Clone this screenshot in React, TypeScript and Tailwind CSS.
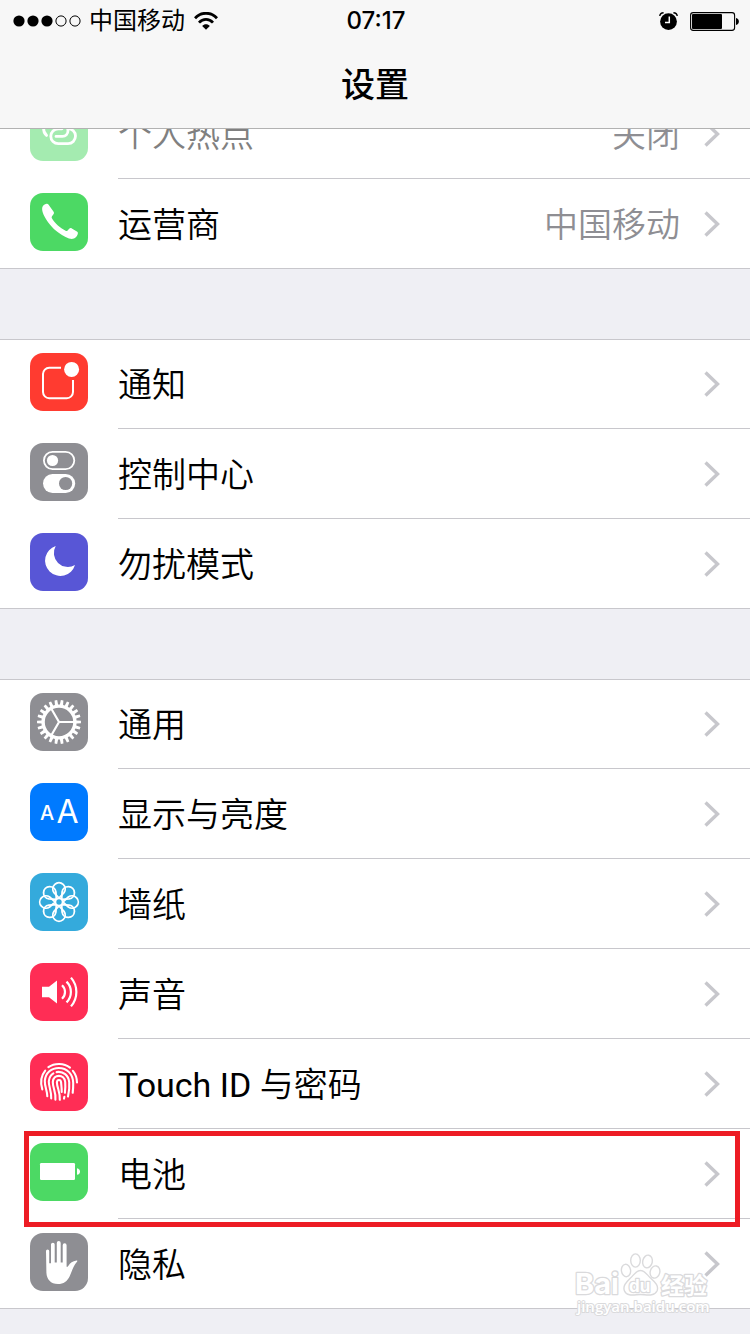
import type { ReactNode } from "react";

type Item = {
  label: string;
  icon: ReactNode;
  tile: string;
  value?: string;
  dimmed?: boolean;
  highlighted?: boolean;
};

const GEAR_TEETH = 22;
const gearPath = (() => {
  const points: string[] = [];
  const at = (radius: number, angle: number) =>
    `${(29 + radius * Math.cos(angle)).toFixed(2)} ${(29 + radius * Math.sin(angle)).toFixed(2)}`;
  const step = (Math.PI * 2) / GEAR_TEETH;
  for (let i = 0; i < GEAR_TEETH; i++) {
    const a = i * step;
    points.push(at(17.6, a - step * 0.32), at(22, a - step * 0.21), at(22, a + step * 0.21), at(17.6, a + step * 0.32));
  }
  return `M${points.join("L")}Z M43.2 29A14.2 14.2 0 1 0 14.8 29A14.2 14.2 0 1 0 43.2 29Z`;
})();

function Glyph({ children }: { children: ReactNode }) {
  return (
    <svg viewBox="0 0 58 58" className="size-full" fill="none" stroke="none" aria-hidden="true">
      {children}
    </svg>
  );
}

const HotspotIcon = (
  <Glyph>
    <g stroke="#fff" strokeWidth="2.8" strokeLinecap="round">
      <path d="M26 33.4H32.5A5.6 5.6 0 0 0 38 27.8A5.6 5.6 0 0 0 32.5 22.2" />
      <path d="M38 25.6A7.4 7.4 0 0 1 38 40.6H28.2A7.4 7.4 0 0 1 28.2 25.8H32" />
      <path d="M16.6 32.4A9 9 0 0 1 13.6 25A8 8 0 0 1 21.5 17.500H29" />
    </g>
  </Glyph>
);

const PhoneIcon = (
  <Glyph>
    <path
      fill="#fff"
      d="M12.2 14.8C12.6 12.4 14.6 11 16.6 10.7C17.6 10.6 18.2 11 18.8 11.9L23.6 18.8C24.2 19.8 24.1 20.7 23.3 21.6L22 23.2C21.5 23.9 21.5 24.5 21.9 25.2C24.5 29.6 30 35 35.6 37.7C36.4 38 37 38 37.6 37.4L39.2 35.8C40 35 40.8 34.9 41.8 35.4L46.9 38.6C48 39.3 48.1 40.2 47.7 41.2C46.8 43.6 45.2 45.4 43 45.8C39.2 46.4 33.6 43.4 28.3 39.5C22.3 35.1 16.8 28.6 13.6 21.7C12.5 19.2 11.9 16.8 12.2 14.8Z"
    />
  </Glyph>
);

const NotificationIcon = (
  <Glyph>
    <path d="M31 14.8H19.2A6.3 6.3 0 0 0 13 21V39A6.3 6.3 0 0 0 19.2 45.2H36.8A6.3 6.3 0 0 0 43 39V27" stroke="#fff" strokeWidth="2" />
    <circle cx="41.6" cy="16.4" r="7.5" fill="#fff" />
  </Glyph>
);

const ControlIcon = (
  <Glyph>
    <rect x="13.9" y="8.9" width="30.4" height="17.2" rx="8.6" stroke="#fff" strokeWidth="1.8" />
    <circle cx="22.5" cy="17.5" r="5.6" fill="#fff" />
    <rect x="13" y="31" width="32.2" height="19" rx="9.5" fill="#fff" />
    <circle cx="35.6" cy="40.5" r="6.6" fill="#8e8e93" />
  </Glyph>
);

const MoonIcon = (
  <Glyph>
    <path fill="#fff" d="M25.7 13A15.3 15.3 0 1 0 45 32A14 14 0 0 1 25.7 13Z" />
  </Glyph>
);

const GearIcon = (
  <Glyph>
    <path fill="#fff" fillRule="evenodd" d={gearPath} />
    <path d="M29 29H44M29 29L21.5 16M29 29L21.5 42" stroke="#fff" strokeWidth="2.2" />
  </Glyph>
);

const DisplayIcon = (
  <Glyph>
    <g fill="#fff" textAnchor="middle" className="font-['Inter',sans-serif]">
      <text x="17.2" y="36.5" fontSize="20" fontWeight="500">A</text>
      <text x="37.5" y="40" fontSize="32" fontWeight="400">A</text>
    </g>
  </Glyph>
);

const WallpaperIcon = (
  <Glyph>
    <g stroke="#fff" strokeWidth="1.8" strokeLinejoin="round">
      <circle cx="29" cy="29" r="3.6" />
      {[0, 45, 90, 135, 180, 225, 270, 315].map((angle) => (
        <path key={angle} transform={`rotate(${angle} 29 29)`} d="M29 25.2L24 19.600A6.2 6.2 0 1 1 34 19.600Z" />
      ))}
    </g>
  </Glyph>
);

const SoundIcon = (
  <Glyph>
    <path fill="#fff" d="M12 23.8H19L27 17.6V40.4L19 34.2H12Z" />
    <g stroke="#fff" strokeWidth="2.2">
      <path d="M32 22.2A9.2 9.2 0 0 1 32 35.8" />
      <path d="M36.5 18.6A14.5 14.5 0 0 1 36.5 39.4" />
      <path d="M41 14.6A22 22 0 0 1 41 43.4" />
    </g>
  </Glyph>
);

const TouchIcon = (
  <Glyph>
    <g stroke="#fff" strokeWidth="2.1" strokeLinecap="round">
      <path d="M18.4 14.2C24.5 9.8 34 9.8 40 14.6" />
      <path d="M15.2 17.6C11.2 22.5 10 29 12.3 36.4" />
      <path d="M42.9 17.8C45.5 21 46.9 25 47 29.4" />
      <path d="M17.3 43.2C17.4 38 14.6 34 14.8 27.8C15.6 19.5 21.5 15 28.8 15C37 15 43 21 43.2 30C43.3 34 43 37 42.7 39.8" />
      <path d="M21.2 45.4C21.8 38.5 18.6 34 18.8 28.4C19.2 24.6 20.8 21.9 23.4 20.4" />
      <path d="M26.6 19.1C33.2 18 38.6 22.4 39.2 29.2C39.6 34.5 39 39.5 38 43.6" />
      <path d="M25.4 46.7C26.3 39.5 22.6 34.5 22.8 29C23.2 20.8 34.4 20.8 35.2 29C35.5 33 35.3 36.6 34.9 39.8M34.4 43.8L34 45.6" />
      <path d="M29.8 46.8C30.4 39.5 27 35 26.9 29.4C27.1 26.2 30.8 26.2 31.1 29.4C31.2 32 31.9 36 31.7 39" />
    </g>
  </Glyph>
);

const BatteryIcon = (
  <Glyph>
    <rect x="10" y="20" width="35" height="17" rx="1.2" fill="#fff" />
    <path fill="#fff" d="M47 25.2C51 25.8 51 31.2 47 31.8Z" />
  </Glyph>
);

const PrivacyIcon = (
  <Glyph>
    <path
      fill="#fff"
      d="M16 18A1.6 1.6 0 0 1 19.2 18V30.2H21V11.6A1.8 1.8 0 0 1 24.7 11.6V29.6H26.8V9.9A1.9 1.9 0 0 1 30.7 9.9V29.6H32.7V12.3A1.9 1.9 0 0 1 36.6 12.3V33.8C37.4 34.1 37.9 33.6 38.4 32.8C40.2 29.8 42.5 28.3 46.5 27.6C47.6 27.5 47.5 28.2 46.8 28.9C43.2 32.7 42.1 38.2 39.7 43.2C37.3 48.3 33.6 51 28 51C20.6 51 16.8 46.5 16.4 39.8Z"
    />
  </Glyph>
);

const sections: Item[][] = [
  [
    { label: "个人热点", icon: HotspotIcon, tile: "bg-[#4cd964]", value: "关闭", dimmed: true },
    { label: "运营商", icon: PhoneIcon, tile: "bg-[#4cd964]", value: "中国移动" },
  ],
  [
    { label: "通知", icon: NotificationIcon, tile: "bg-[#ff3b30]" },
    { label: "控制中心", icon: ControlIcon, tile: "bg-[#8e8e93]" },
    { label: "勿扰模式", icon: MoonIcon, tile: "bg-[#5856d6]" },
  ],
  [
    { label: "通用", icon: GearIcon, tile: "bg-[#8e8e93]" },
    { label: "显示与亮度", icon: DisplayIcon, tile: "bg-[#007aff]" },
    { label: "墙纸", icon: WallpaperIcon, tile: "bg-[#34aadc]" },
    { label: "声音", icon: SoundIcon, tile: "bg-[#ff2d55]" },
    { label: "Touch ID 与密码", icon: TouchIcon, tile: "bg-[#ff2d55]" },
    { label: "电池", icon: BatteryIcon, tile: "bg-[#4cd964]", highlighted: true },
    { label: "隐私", icon: PrivacyIcon, tile: "bg-[#8e8e93]" },
  ],
];

function Row({ item }: { item: Item }) {
  return (
    <li className="group relative h-[90px] first:-mt-px last:-mb-px">
      <a href="#" className="flex h-full pl-[30px]">
        <span className={`mt-[14px] size-[58px] shrink-0 overflow-hidden rounded-[13px] ${item.tile} ${item.dimmed ? "opacity-50" : ""}`}>
          {item.icon}
        </span>
        <span className="ml-[30px] flex min-w-0 flex-1 items-center border-b border-[#c8c7cc] pr-[30px] font-['Roboto','Noto_Sans_CJK_SC_DemiLight','Noto_Sans_CJK_SC',sans-serif] text-[34px] leading-[48px] group-last:border-transparent">
          <span className={`flex-1 pt-[2px] ${item.dimmed ? "text-[#808080]" : "text-black"}`}>{item.label}</span>
          {item.value && <span className="pt-[2px] text-[#8e8e93]">{item.value}</span>}
          <svg viewBox="0 0 16 26" className="ml-6 h-[26px] w-4 shrink-0" fill="none" aria-hidden="true">
            <path d="M1.5 1.5L13.5 13L1.5 24.5" stroke="#c7c7cc" strokeWidth="3.4" />
          </svg>
        </span>
      </a>
      {item.highlighted && (
        <span className="pointer-events-none absolute top-[2px] right-[10px] -bottom-2 left-6 z-10 border-5 border-[#ed1c24]" />
      )}
    </li>
  );
}

function StatusBar() {
  return (
    <div className="grid h-[42px] grid-cols-[1fr_auto_1fr] items-center pr-[11px] pl-[13px] text-2xl leading-8">
      <div className="flex items-center">
        <svg viewBox="0 0 68 12" className="h-3 w-[68px]" aria-label="信号强度">
          {[6, 20, 34].map((x) => (
            <circle key={x} cx={x} cy="6" r="5.6" />
          ))}
          {[48, 62].map((x) => (
            <circle key={x} cx={x} cy="6" r="5.1" fill="none" stroke="#000" />
          ))}
        </svg>
        <span className="ml-2">中国移动</span>
        <svg viewBox="0 0 24 18" className="ml-[9px] h-[18px] w-6" fill="none" stroke="#000" aria-label="无线局域网">
          <path d="M1 6.2C7 -0.4 17 -0.4 23 6.2" strokeWidth="2.8" />
          <path d="M5 10.6C9 6.4 15 6.4 19 10.6" strokeWidth="2.8" />
          <path d="M12 17.8L8.2 14C10.2 11.8 13.8 11.8 15.8 14Z" fill="#000" stroke="none" />
        </svg>
      </div>
      <time className="font-medium">07:17</time>
      <div className="flex items-center justify-end gap-3">
        <svg viewBox="0 0 19 18" className="h-[18px] w-[19px]" fill="none" aria-label="闹钟">
          <circle cx="9.5" cy="9.6" r="8.4" fill="#000" />
          <path d="M0.8 4C1 2 2.5 0.9 4.6 0.8M18.2 4C18 2 16.5 0.9 14.4 0.8" stroke="#000" strokeWidth="1.4" />
          <path d="M10.3 4.6V10.4H6" stroke="#fff" strokeWidth="1.5" />
        </svg>
        <svg viewBox="0 0 49 19" className="h-[19px] w-[49px]" fill="none" aria-label="电池电量">
          <rect x="0.6" y="0.6" width="44" height="17.8" rx="2.6" stroke="#000" strokeWidth="1.1" />
          <rect x="2" y="2" width="30" height="15" rx="1" fill="#000" />
          <path d="M46 6C49.8 6.6 49.8 12.4 46 13Z" fill="#000" />
        </svg>
      </div>
    </div>
  );
}

function Watermark() {
  return (
    <svg viewBox="0 0 136 66" className="pointer-events-none absolute right-10 -bottom-2 z-20 h-[66px] w-[136px]" role="img" aria-label="Baidu 经验">
      <g fill="#fff" stroke="#dadadc" strokeWidth="1.4" strokeLinejoin="round">
        <ellipse cx="52" cy="19.500" rx="4.600" ry="6.200" transform="rotate(-8 52 19.500)" />
        <ellipse cx="61.500" cy="9.500" rx="4.800" ry="6.600" />
        <ellipse cx="73.500" cy="10.500" rx="4.800" ry="6.400" transform="rotate(12 73.500 10.500)" />
        <ellipse cx="81" cy="21" rx="4.800" ry="6.200" transform="rotate(14 81 21)" />
        <path d="M66.5 19.500C71 19.500 73 24 77 27.500C81.500 31.500 85 35 83 40C80 46 72 43.500 66.500 43.500C61 43.500 53 46 50.500 40C48.500 35 52 31.500 56 27.500C60 24 62 19.500 66.500 19.500Z" />
        <g className="font-['Inter','Noto_Sans_CJK_SC',sans-serif]" fontWeight="700" paintOrder="stroke">
          <text x="1" y="43" fontSize="29" strokeWidth="2.600">Bai</text>
          <text x="55" y="41" fontSize="17" strokeWidth="2.400">du</text>
          <text x="87" y="43" fontSize="23" strokeWidth="2.600">经验</text>
        </g>
        <text x="3" y="61" fontSize="15" fontWeight="600" strokeWidth="2" paintOrder="stroke" className="font-['Open_Sans',sans-serif]">
          jingyan.baidu.com
        </text>
      </g>
    </svg>
  );
}

export default function App() {
  return (
    <div className="min-h-screen bg-[#efeff4] font-['Inter','Noto_Sans_CJK_SC',sans-serif] text-black">
      <header className="relative z-10 border-b border-[#b2b2b2] bg-[#f7f7f7]">
        <StatusBar />
        <h1 className="flex h-[86px] items-center justify-center text-[34px] leading-[48px] font-medium">设置</h1>
      </header>
      <main className="relative -mt-10 flex flex-col gap-[70px]">
        {sections.map((items) => (
          <ul key={items[0].label} className="border-y border-[#c8c7cc] bg-white">
            {items.map((item) => (
              <Row key={item.label} item={item} />
            ))}
          </ul>
        ))}
        <Watermark />
      </main>
    </div>
  );
}
